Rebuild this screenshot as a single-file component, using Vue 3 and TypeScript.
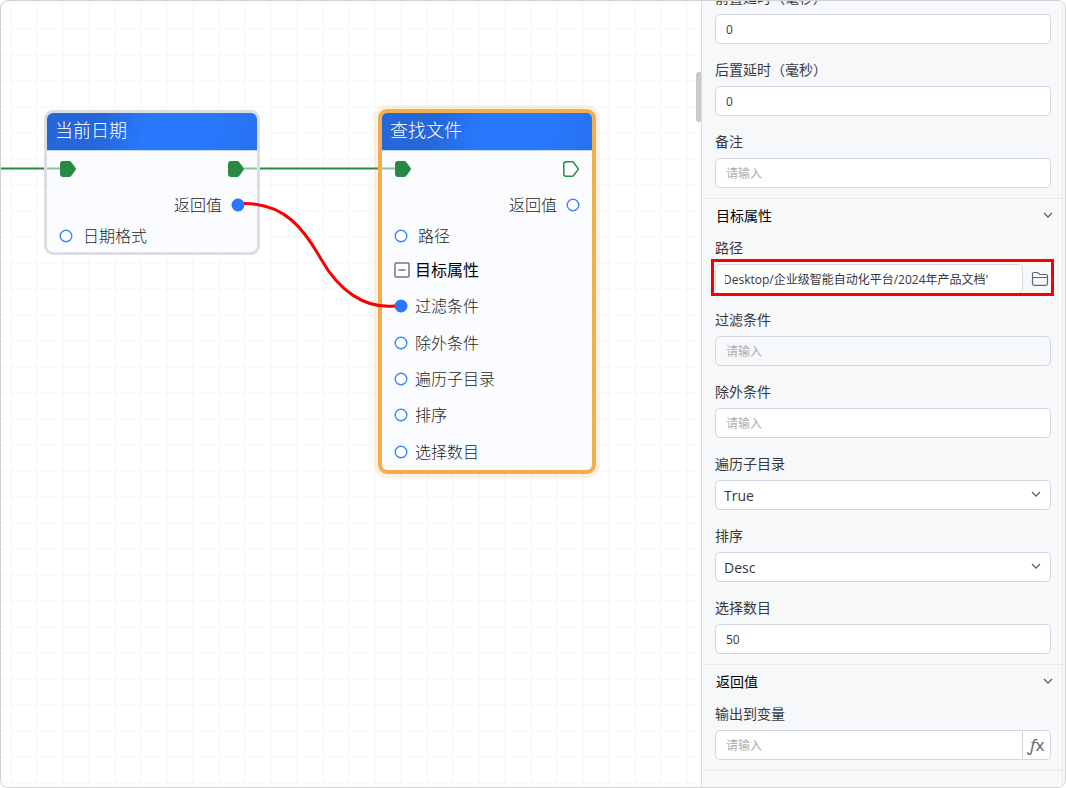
<script setup lang="ts">
import { reactive } from 'vue'

interface Field {
  id: string
  label: string
  kind: 'text' | 'path' | 'select' | 'variable'
  muted?: boolean
  options?: string[]
}

interface Section {
  title?: string
  fields: Field[]
}

const values = reactive<Record<string, string>>({
  before: '0',
  after: '0',
  note: '',
  path: "Desktop/企业级智能自动化平台/2024年产品文档'",
  filter: '',
  exclude: '',
  recursive: 'True',
  order: 'Desc',
  count: '50',
  output: '',
})

const sections: Section[] = [
  {
    fields: [
      { id: 'before', label: '前置延时（毫秒）', kind: 'text' },
      { id: 'after', label: '后置延时（毫秒）', kind: 'text' },
      { id: 'note', label: '备注', kind: 'text' },
    ],
  },
  {
    title: '目标属性',
    fields: [
      { id: 'path', label: '路径', kind: 'path' },
      { id: 'filter', label: '过滤条件', kind: 'text', muted: true },
      { id: 'exclude', label: '除外条件', kind: 'text' },
      { id: 'recursive', label: '遍历子目录', kind: 'select', options: ['True', 'False'] },
      { id: 'order', label: '排序', kind: 'select', options: ['Desc', 'Asc'] },
      { id: 'count', label: '选择数目', kind: 'text' },
    ],
  },
  {
    title: '返回值',
    fields: [{ id: 'output', label: '输出到变量', kind: 'variable' }],
  },
]

const targetPorts = [
  { name: '过滤条件', linked: true },
  { name: '除外条件', linked: false },
  { name: '遍历子目录', linked: false },
  { name: '排序', linked: false },
  { name: '选择数目', linked: false },
]

const flowPath = 'M3 .8H9.4Q10 .8 10.4 1.3L15 7.3Q15.4 8 15 8.7L10.4 14.7Q10 15.2 9.4 15.2H3Q.8 15.2 .8 13V3Q.8 .8 3 .8Z'
</script>

<template>
  <div class="frame">
    <main class="canvas">
      <svg class="wires" aria-hidden="true">
        <path class="flow-wire" d="M0 167.5H60M243 167.5H394" />
      </svg>

      <section class="node date-node">
        <h2 class="node-title">当前日期</h2>
        <div class="row flow-row">
          <svg class="flow-port linked" viewBox="0 0 16 16"><path :d="flowPath" /></svg>
          <svg class="flow-port linked" viewBox="0 0 16 16"><path :d="flowPath" /></svg>
        </div>
        <div class="row out-row">
          <span>返回值</span>
          <svg class="port linked" viewBox="0 0 14 14"><circle cx="7" cy="7" r="5.8" /></svg>
        </div>
        <div class="row in-row">
          <svg class="port" viewBox="0 0 14 14"><circle cx="7" cy="7" r="5.8" /></svg>
          <span>日期格式</span>
        </div>
      </section>

      <section class="node find-node">
        <h2 class="node-title">查找文件</h2>
        <div class="row flow-row">
          <svg class="flow-port linked" viewBox="0 0 16 16"><path :d="flowPath" /></svg>
          <svg class="flow-port" viewBox="0 0 16 16"><path :d="flowPath" /></svg>
        </div>
        <div class="row out-row">
          <span>返回值</span>
          <svg class="port" viewBox="0 0 14 14"><circle cx="7" cy="7" r="5.8" /></svg>
        </div>
        <div class="row in-row">
          <svg class="port" viewBox="0 0 14 14"><circle cx="7" cy="7" r="5.8" /></svg>
          <span>路径</span>
        </div>
        <div class="row group-row">
          <button class="collapse" type="button" aria-label="收起目标属性">
            <svg viewBox="0 0 16 16"><rect x="1" y="1" width="14" height="14" rx="1" /><path d="M4.5 8h7" /></svg>
          </button>
          <span>目标属性</span>
        </div>
        <div class="port-list">
          <div v-for="p in targetPorts" :key="p.name" class="row list-row">
            <svg class="port" :class="{ linked: p.linked }" viewBox="0 0 14 14"><circle cx="7" cy="7" r="5.8" /></svg>
            <span>{{ p.name }}</span>
          </div>
        </div>
      </section>

      <svg class="wires" aria-hidden="true">
        <path class="data-wire" d="M243 202.5C284 202.5 303 228 320 258C338 290 364 308 394 305" />
      </svg>
      <div class="handle"></div>
    </main>

    <aside class="panel">
      <form class="panel-body" @submit.prevent>
        <section v-for="(s, i) in sections" :key="i" class="section">
          <button v-if="s.title" class="section-title" type="button">
            <span>{{ s.title }}</span>
            <svg class="chevron" viewBox="0 0 10 10"><path d="M1 3l4 4 4-4" /></svg>
          </button>
          <div v-for="f in s.fields" :key="f.id" class="field">
            <label :for="f.id">{{ f.label }}</label>
            <div v-if="f.kind === 'select'" class="control select-control">
              <select :id="f.id" v-model="values[f.id]">
                <option v-for="o in f.options" :key="o">{{ o }}</option>
              </select>
              <svg class="chevron" viewBox="0 0 10 10"><path d="M1 3l4 4 4-4" /></svg>
            </div>
            <div v-else class="control" :class="f.kind">
              <input
                :id="f.id"
                v-model="values[f.id]"
                type="text"
                placeholder="请输入"
                :class="{ muted: f.muted }"
              />
              <button v-if="f.kind === 'path'" class="browse" type="button" aria-label="选择文件夹">
                <svg viewBox="0 0 18 16">
                  <path d="M1.5 12.8V3Q1.5 1.5 3 1.5H6.6L8.7 3.5H15Q16.5 3.5 16.5 5V12.8Q16.5 14.3 15 14.3H3Q1.5 14.3 1.5 12.8ZM1.5 6.5H16.5" />
                </svg>
              </button>
              <button v-if="f.kind === 'variable'" class="formula" type="button"><i>ƒ</i>x</button>
            </div>
          </div>
        </section>
        <div class="end-line"></div>
      </form>
    </aside>
  </div>
</template>

<style>
body {
  background: #fff;
}
</style>

<style scoped>
* {
  box-sizing: border-box;
}

.frame {
  display: grid;
  grid-template-columns: minmax(0, 1fr) 364px;
  grid-template-rows: minmax(0, 1fr);
  height: 100vh;
  overflow: hidden;
  border: 1px solid #d2d2d4;
  border-radius: 8px;
  background: #fff;
  color: #36383d;
  font-family: "Open Sans", "Noto Sans CJK SC", sans-serif;
}

button,
input,
select {
  font-family: inherit;
  color: inherit;
}

button {
  padding: 0;
  border: 0;
  background: none;
}

.canvas {
  position: relative;
  border-right: 5px solid #fff;
  background-image: linear-gradient(90deg, #fafafa 2px, transparent 2px),
    linear-gradient(#fafafa 2px, transparent 2px);
  background-size: 26px 26px;
  background-position: 9px 1px;
}

.wires {
  position: absolute;
  inset: 0;
  width: 100%;
  height: 100%;
  fill: none;
  pointer-events: none;
}

.flow-wire {
  stroke: #278a42;
  stroke-width: 2;
}

.data-wire {
  stroke: #f90000;
  stroke-width: 3;
}

.handle {
  position: absolute;
  top: 71px;
  right: -5px;
  width: 5px;
  height: 50px;
  border-radius: 3px 0 0 3px;
  background: #c9c9c9;
}

.node {
  position: absolute;
  overflow: hidden;
  border: 3px solid #dcdde5;
  border-radius: 9px;
  background: rgba(248, 250, 255, 0.5);
  background-clip: padding-box;
  color: #1c1e22;
  font-size: 16px;
  font-weight: 300;
}

.date-node {
  left: 43px;
  top: 109px;
  width: 216px;
  height: 145px;
}

.find-node {
  left: 377px;
  top: 108px;
  width: 218px;
  height: 365px;
  border: 4px solid #f0ae51;
  box-shadow: 0 0 0 4px rgba(245, 160, 60, 0.15);
}

.node-title {
  height: 38px;
  margin: 0;
  padding-left: 8px;
  border-bottom: 1px solid #c3d8ff;
  background: linear-gradient(105deg, #2566d8 25%, #2879ff 47%, #2879ff 75%, #2871f0);
  color: #fff;
  font-size: 18px;
  font-weight: 300;
  line-height: 35px;
}

.row {
  display: flex;
  align-items: center;
  padding: 0 12px;
  line-height: 24px;
}

.flow-row {
  justify-content: space-between;
  height: 35px;
  padding: 0 13px;
}

.out-row {
  justify-content: flex-end;
  gap: 9px;
  height: 37px;
}

.in-row {
  gap: 10px;
  height: 26px;
}

.group-row {
  gap: 5px;
  height: 39px;
  padding-top: 2px;
  color: #000;
  font-weight: 400;
}

.port-list {
  display: grid;
  grid-auto-rows: 1fr;
  height: 182px;
}

.list-row {
  gap: 7px;
}

.port {
  width: 14px;
  height: 14px;
  fill: #fff;
  stroke: #3c86ff;
  stroke-width: 1.4;
}

.port.linked {
  fill: #2879ff;
  stroke: #2879ff;
}

.flow-port {
  width: 16px;
  height: 16px;
  fill: #fff;
  stroke: #278a42;
  stroke-width: 1.5;
}

.flow-port.linked {
  fill: #278a42;
}

.collapse {
  display: flex;
}

.collapse svg {
  width: 16px;
  height: 16px;
  fill: #fff;
  stroke: #73758a;
  stroke-width: 1.5;
}

.panel {
  overflow: hidden auto;
  padding: 0 2px 0 4px;
  border-left: 1px solid #dadce2;
  background: #f7f8fa;
}

.panel-body {
  min-height: calc(100% + 19px);
  margin-top: -19px;
  border-right: 1px solid #e8e9ed;
}

.section {
  padding: 0 11px 0 9px;
}

.section + .section,
.end-line {
  border-top: 1px solid #e8e9ed;
}

.section-title {
  display: flex;
  align-items: center;
  justify-content: space-between;
  width: calc(100% + 2px);
  height: 33px;
  padding: 0 0 2px 1px;
  color: #000;
  font-size: 14px;
  font-weight: 400;
}

.chevron {
  width: 10px;
  height: 10px;
  fill: none;
  stroke: #5d6066;
  stroke-width: 1.3;
}

.field {
  padding-bottom: 10px;
}

.field label {
  display: block;
  height: 32px;
  font-size: 14px;
  line-height: 32px;
}

.control {
  position: relative;
  display: flex;
  height: 30px;
}

.control input,
.control select {
  flex: 1;
  min-width: 0;
  height: 30px;
  margin: 0;
  padding: 0 10px;
  border: 1px solid #d2d6e2;
  border-radius: 5px;
  background: #fff;
  font-size: 12px;
}

.control input::placeholder {
  color: #a9adb8;
  opacity: 1;
}

.control .muted {
  background: #f7f8fa;
}

.control select {
  appearance: none;
  padding: 0 8px;
  font-size: 14px;
}

.select-control .chevron {
  position: absolute;
  top: 9px;
  right: 10px;
  pointer-events: none;
}

.path::after {
  content: "";
  position: absolute;
  inset: -5px -3px -2px -4px;
  border: 3px solid #f90000;
  pointer-events: none;
}

.control.path input {
  padding: 0 8px 0 9px;
  text-indent: -2px;
}

.browse {
  display: flex;
  align-items: center;
  justify-content: flex-end;
  width: 28px;
  padding-right: 2px;
}

.browse svg {
  width: 18px;
  height: 16px;
  fill: none;
  stroke: #5f6678;
  stroke-width: 1.2;
}

.control.variable input {
  border-radius: 5px 0 0 5px;
}

.formula {
  width: 28px;
  border: 1px solid #d2d6e2;
  border-left: 0;
  border-radius: 0 5px 5px 0;
  background: #fff;
  color: #62687a;
  font-family: "Noto Sans", sans-serif;
  font-size: 17px;
  line-height: 20px;
}
</style>
